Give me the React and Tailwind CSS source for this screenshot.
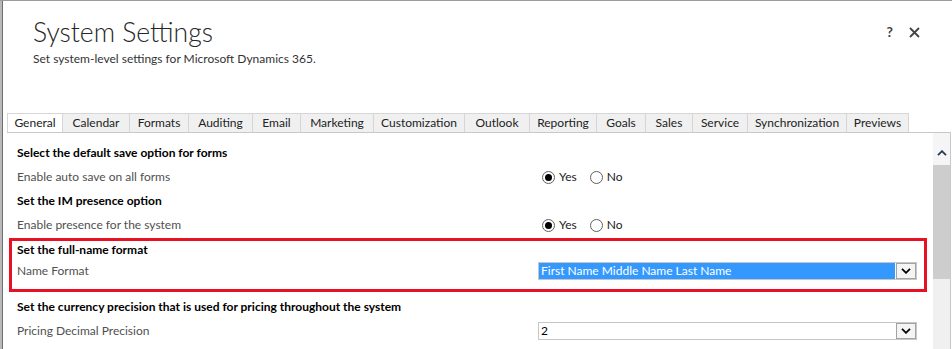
import React from 'react';

const tabs = [
  { name: 'General', w: 'w-[55px]' },
  { name: 'Calendar', w: 'w-[67px]' },
  { name: 'Formats', w: 'w-[59px]' },
  { name: 'Auditing', w: 'w-[64px]' },
  { name: 'Email', w: 'w-[48px]' },
  { name: 'Marketing', w: 'w-[73px]' },
  { name: 'Customization', w: 'w-[91px]' },
  { name: 'Outlook', w: 'w-[65px]' },
  { name: 'Reporting', w: 'w-[67px]' },
  { name: 'Goals', w: 'w-[49px]' },
  { name: 'Sales', w: 'w-[47px]' },
  { name: 'Service', w: 'w-[55px]' },
  { name: 'Synchronization', w: 'w-[99px]' },
  { name: 'Previews', w: 'w-[63px]' },
];

function Radio({ checked, label }) {
  return (
    <div className="flex items-center gap-[4px]">
      <span className="w-[13px] h-[13px] rounded-full border border-[#5f5f5f] bg-white flex items-center justify-center">
        {checked && <span className="w-[7px] h-[7px] rounded-full bg-black" />}
      </span>
      <span className="text-[#222]">{label}</span>
    </div>
  );
}

function Chevron({ className, up }) {
  return (
    <svg width="10" height="6" viewBox="0 0 10 6" className={className}>
      <path d={up ? 'M1 5.2 L5 1.2 L9 5.2' : 'M1 0.8 L5 4.8 L9 0.8'} fill="none" stroke="currentColor" strokeWidth="1.8" />
    </svg>
  );
}

function Select({ value, selected }) {
  return (
    <div className="w-[379px] h-[18px] border border-[#c6c6c6] bg-white flex">
      <div className={`flex-1 flex items-center pl-[2px] ${selected ? 'bg-[#3399ff] text-white' : 'text-black'}`}>
        {value}
      </div>
      <div className="w-[20px] h-full ml-[1px] border border-[#a3a3a3] bg-[#f4f4f4] flex items-center justify-center text-black">
        <Chevron />
      </div>
    </div>
  );
}

function Heading({ children, className = 'h-[24px]' }) {
  return <div className={`${className} flex items-center font-bold text-black`}>{children}</div>;
}

function Row({ label, children, className = 'h-[24px]' }) {
  return (
    <div className={`${className} flex items-center`}>
      <div className="w-[521px] text-[#505050]">{label}</div>
      {children}
    </div>
  );
}

export default function App() {
  return (
    <div className="w-[952px] h-[349px] overflow-hidden bg-white flex border-t border-[#9c9c9c] text-[12px]" style={{ fontFamily: '"Segoe UI", Lato, sans-serif' }}>
      <div className="w-[3px] bg-[#b9b9b9] border-r border-[#6f6f6f]" />

      <div className="flex-1 flex flex-col">
        {/* header */}
        <div className="h-[112px] flex justify-between pl-[30px] pr-[32px] pt-[15px]">
          <div>
            <div className="text-[26.5px] leading-[32px] font-light text-[#262626]">System Settings</div>
            <div className="text-[12px] mt-[2px] text-[#333]">Set system-level settings for Microsoft Dynamics 365.</div>
          </div>
          <div className="flex items-start gap-[16px] pt-[9px] text-[#444]">
            <span className="text-[14px] leading-[14px] font-bold">?</span>
            <svg width="11" height="11" viewBox="0 0 11 11" className="mt-[2px]">
              <path d="M1 1 L10 10 M10 1 L1 10" stroke="currentColor" strokeWidth="1.8" />
            </svg>
          </div>
        </div>

        {/* tabs */}
        <div className="flex pl-[4px] h-[19px]">
          {tabs.map((t, i) => (
            <div
              key={t.name}
              className={`${t.w} h-full border-t border-l border-[#d6d6d6] flex items-center justify-center text-[#222] ${i === 0 ? 'bg-white' : 'bg-[#f0f0f0]'} ${i === tabs.length - 1 ? 'border-r' : ''}`}
            >
              {t.name}
            </div>
          ))}
        </div>

        {/* panel */}
        <div className="flex-1 ml-[4px] mr-[1px] border-t border-r border-[#c8c8c8] flex">
          <div className="flex-1 pt-[8px]">
            <div className="pl-[10px]">
              <Heading>Select the default save option for forms</Heading>
              <Row label="Enable auto save on all forms">
                <div className="flex items-center gap-[13px] ml-[4px]">
                  <Radio checked label="Yes" />
                  <Radio label="No" />
                </div>
              </Row>
              <Heading>Set the IM presence option</Heading>
              <Row label="Enable presence for the system">
                <div className="flex items-center gap-[13px] ml-[4px]">
                  <Radio checked label="Yes" />
                  <Radio label="No" />
                </div>
              </Row>
            </div>

            <div className="ml-[2px] mr-[6px] border-[3px] border-[#e81123] pl-[5px] pb-[5px] mt-[1px]">
              <Heading className="h-[17px]">Set the full-name format</Heading>
              <Row label="Name Format" className="h-[26px]">
                <Select value="First Name Middle Name Last Name" selected />
              </Row>
            </div>

            <div className="pl-[10px] pt-[3px]">
              <Heading>Set the currency precision that is used for pricing throughout the system</Heading>
              <Row label="Pricing Decimal Precision">
                <Select value="2" />
              </Row>
            </div>
          </div>

          {/* scrollbar */}
          <div className="w-[17px] flex flex-col bg-[#f0f0f0]">
            <div className="h-[32px] bg-[#f5f5f5] flex items-end justify-center pb-[9px] text-[#24385a]">
              <Chevron up />
            </div>
            <div className="h-[114px] bg-[#cdcdcd]" />
          </div>
        </div>
      </div>
    </div>
  );
}
